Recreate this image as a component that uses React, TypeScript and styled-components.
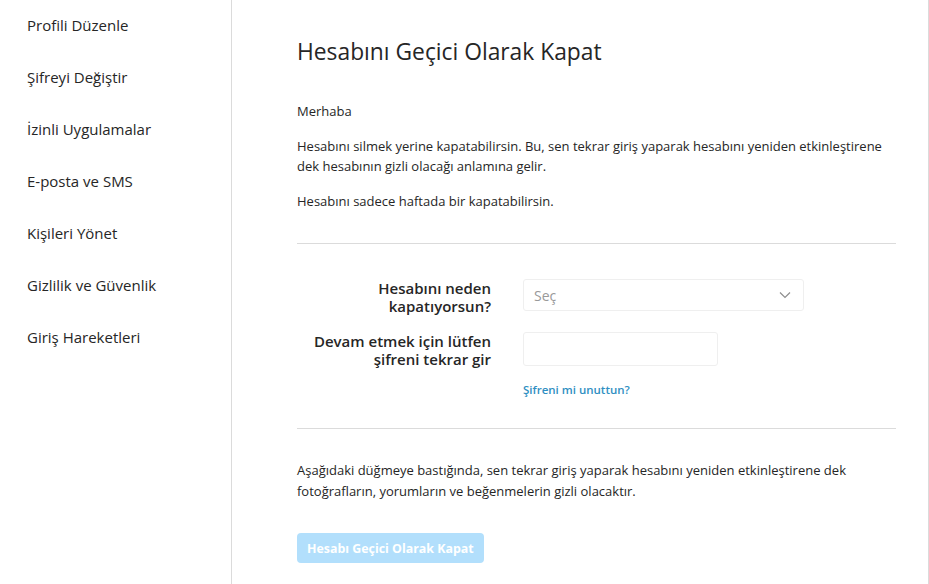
import React from 'react';
import styled, { createGlobalStyle } from 'styled-components';

const GlobalStyle = createGlobalStyle`
	html, body {
		margin: 0;
		padding: 0;
		background: #fff;
	}
	body {
		font-family: 'Open Sans', 'Noto Sans', sans-serif;
		color: #262626;
	}
	* {
		box-sizing: border-box;
	}
`;

const Page = styled.div`
	display: flex;
	width: 929px;
	height: 584px;
	border-right: 1px solid #dbdbdb;
	overflow: hidden;
`;

const Sidebar = styled.ul`
	width: 232px;
	flex-shrink: 0;
	margin: 0;
	padding: 0;
	list-style: none;
	border-right: 1px solid #dbdbdb;
`;

const NavItem = styled.li`
	padding: 15px 16px 17px 27px;
	font-size: 15px;
	line-height: 20px;
	color: #262626;
`;

const Main = styled.main`
	flex: 1;
	padding: 34px 32px 0 65px;
`;

const Title = styled.h1`
	margin: 0 0 31px;
	font-size: 22.8px;
	font-weight: 400;
	line-height: 36px;
`;

const Text = styled.p<{ $last?: boolean }>`
	margin: 0 0 ${(p) => (p.$last ? 32 : 15)}px;
	font-size: 13px;
	line-height: 20px;
`;

const Divider = styled.hr`
	margin: 0;
	border: none;
	border-top: 1px solid #dbdbdb;
`;

const Form = styled.div`
	display: grid;
	grid-template-columns: 194px 1fr;
	column-gap: 32px;
	row-gap: 17px;
	padding: 35px 0 31px;
	align-items: start;
`;

const Label = styled.label`
	display: block;
	font-size: 15px;
	font-weight: 600;
	line-height: 18px;
	text-align: right;
`;

const Field = styled.div<{ $width: number }>`
	width: ${(p) => p.$width}px;
	height: ${(p) => (p.$width > 200 ? 32 : 34)}px;
	border: 1px solid #efefef;
	border-radius: 3px;
	background: #fff;
	display: flex;
	align-items: center;
	justify-content: space-between;
	padding: 0 12px 0 10px;
	font-size: 14px;
	color: #999;
`;

const Stack = styled.div`
	display: flex;
	flex-direction: column;
	gap: 17px;
`;

const Link = styled.a`
	font-size: 11.5px;
	font-weight: 600;
	color: #2f8fc2;
	text-decoration: none;
	line-height: 14px;
`;

const Notice = styled.p`
	margin: 31px 0 31px;
	font-size: 13px;
	line-height: 21px;
`;

const Button = styled.button`
	background: #b2dffc;
	color: #fff;
	border: none;
	border-radius: 4px;
	font-family: inherit;
	font-size: 12.4px;
	font-weight: 700;
	height: 30px;
	padding: 0 10px;
`;

const navItems = [
	'Profili Düzenle',
	'Şifreyi Değiştir',
	'İzinli Uygulamalar',
	'E-posta ve SMS',
	'Kişileri Yönet',
	'Gizlilik ve Güvenlik',
	'Giriş Hareketleri',
];

const Chevron = () => (
	<svg width="12" height="8" viewBox="0 0 12 8" fill="none">
		<path d="M1 1.5l5 5 5-5" stroke="#8e8e8e" strokeWidth="1.2" />
	</svg>
);

export default function App() {
	return (
		<>
			<GlobalStyle />
			<Page>
				<Sidebar>
					{navItems.map((item) => (
						<NavItem key={item}>{item}</NavItem>
					))}
				</Sidebar>
				<Main>
					<Title>Hesabını Geçici Olarak Kapat</Title>
					<Text>Merhaba</Text>
					<Text>
						Hesabını silmek yerine kapatabilirsin. Bu, sen tekrar giriş yaparak hesabını yeniden etkinleştirene
						dek hesabının gizli olacağı anlamına gelir.
					</Text>
					<Text $last>Hesabını sadece haftada bir kapatabilirsin.</Text>
					<Divider />
					<Form>
						<Label>
							Hesabını neden
							<br />
							kapatıyorsun?
						</Label>
						<Field $width={281}>
							<span>Seç</span>
							<Chevron />
						</Field>
						<Label>
							Devam etmek için lütfen
							<br />
							şifreni tekrar gir
						</Label>
						<Stack>
							<Field $width={195} />
							<Link href="#">Şifreni mi unuttun?</Link>
						</Stack>
					</Form>
					<Divider />
					<Notice>
						Aşağıdaki düğmeye bastığında, sen tekrar giriş yaparak hesabını yeniden etkinleştirene dek
						fotoğrafların, yorumların ve beğenmelerin gizli olacaktır.
					</Notice>
					<Button>Hesabı Geçici Olarak Kapat</Button>
				</Main>
			</Page>
		</>
	);
}
